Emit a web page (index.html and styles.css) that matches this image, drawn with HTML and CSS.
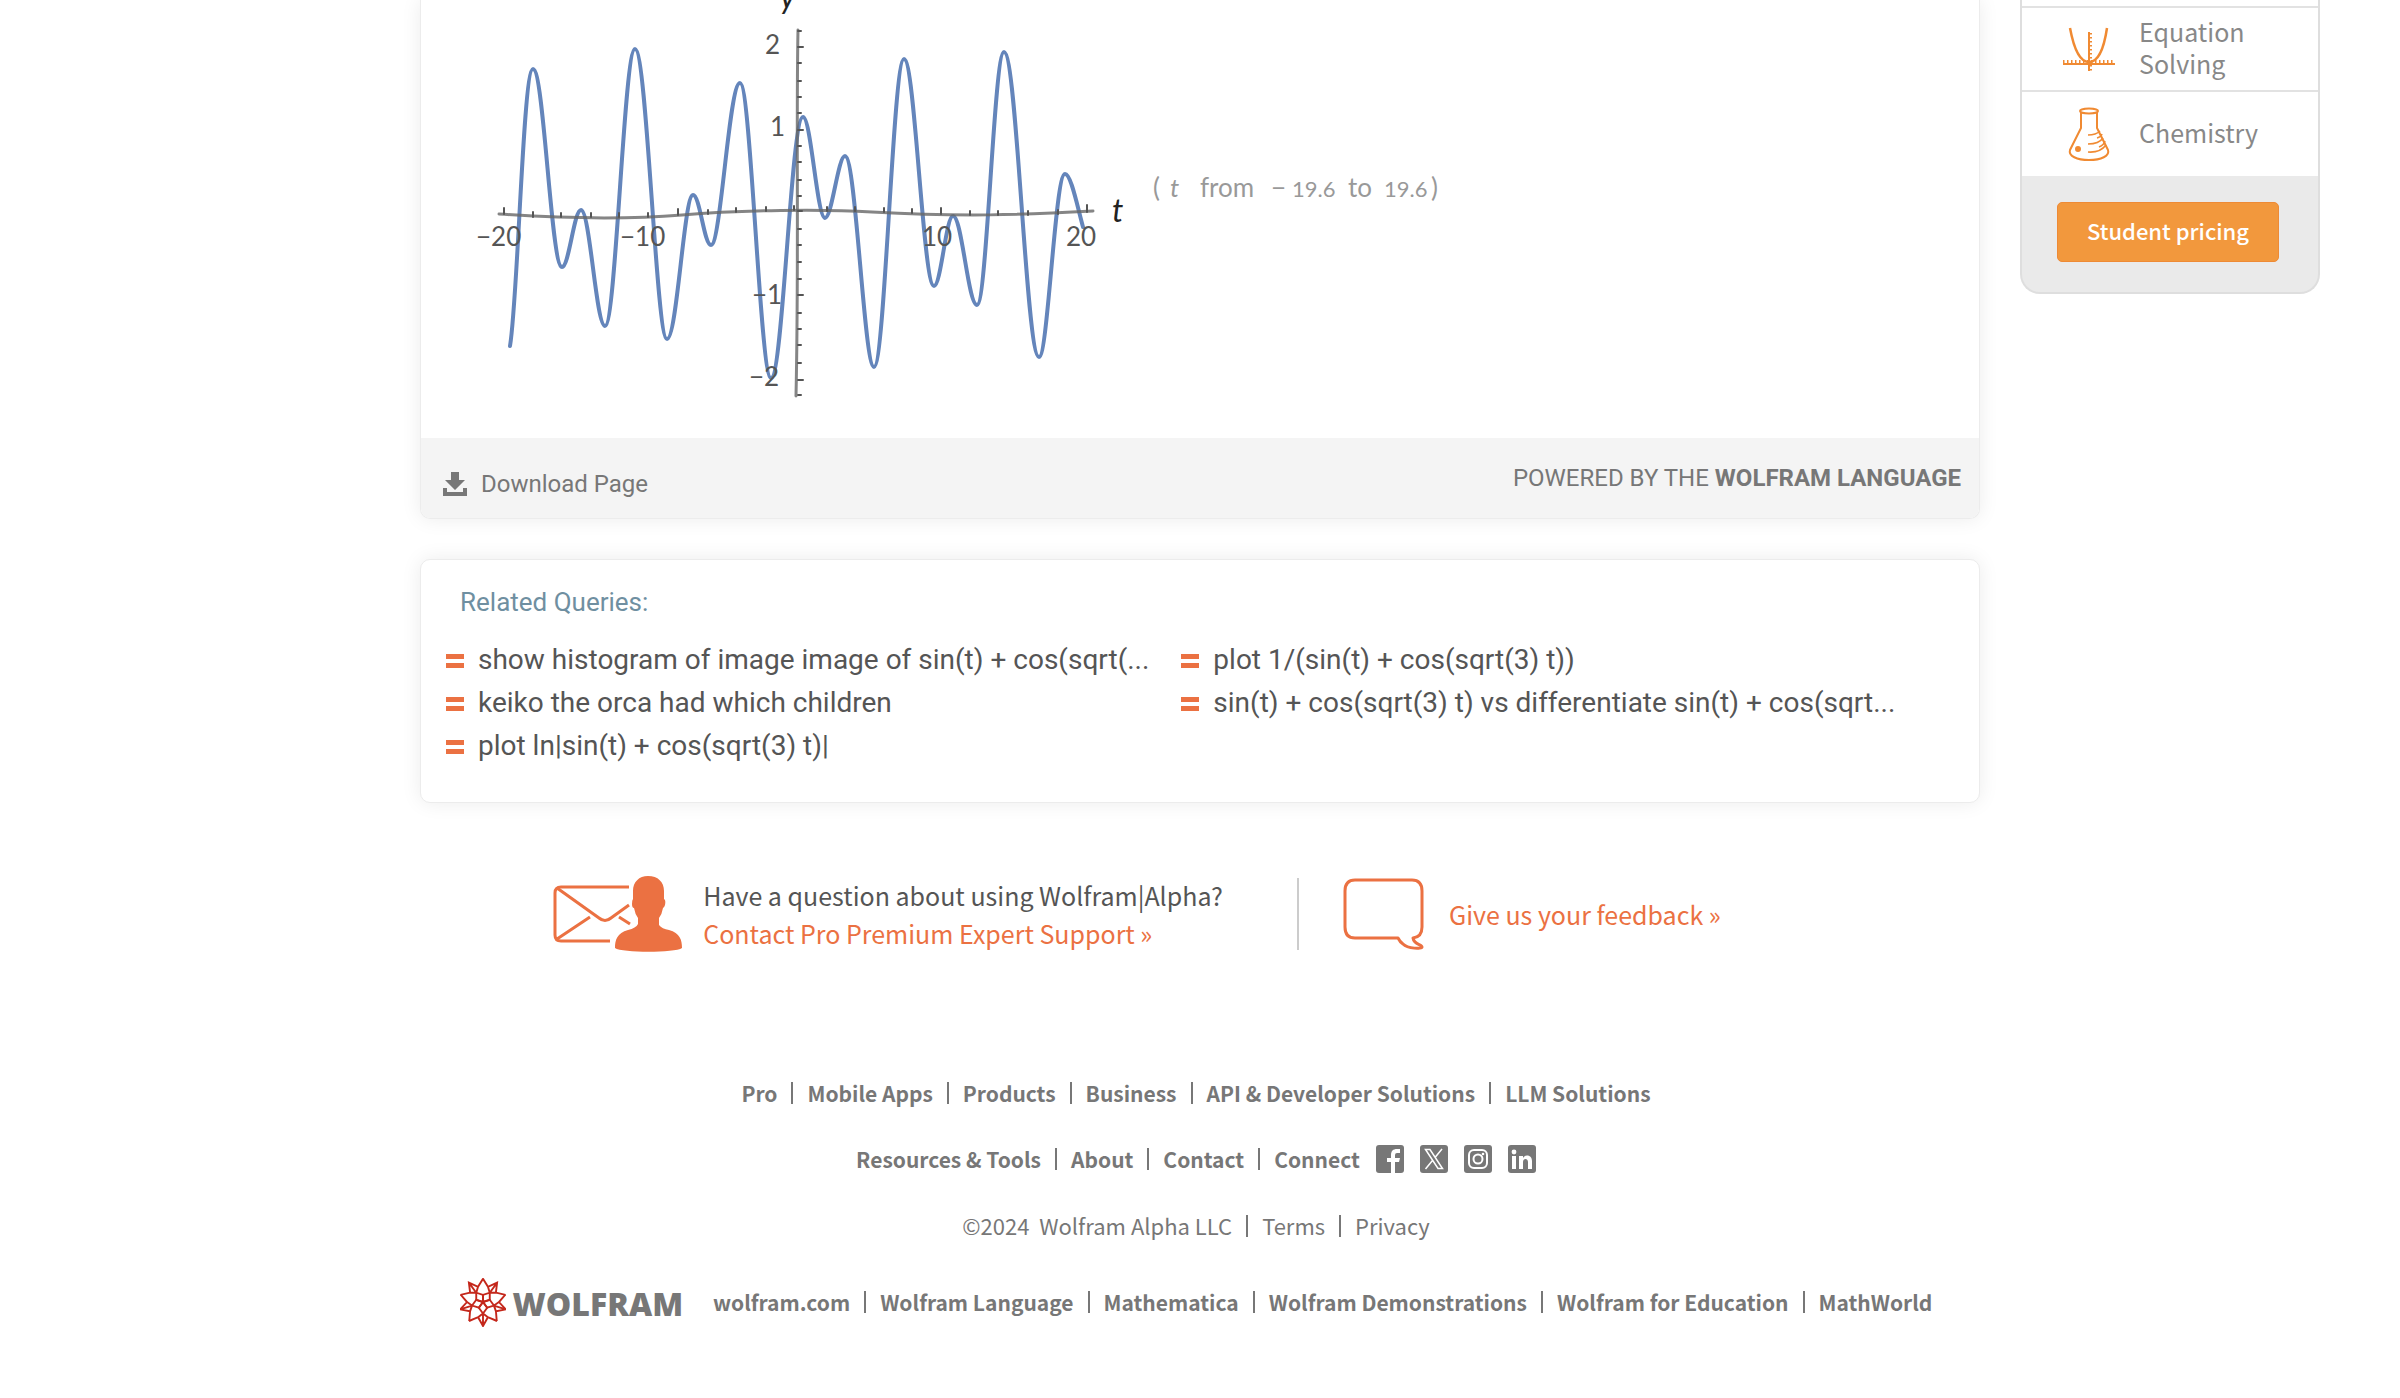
FILE: index.html
```html
<!DOCTYPE html>
<html lang="en">
<head>
<meta charset="utf-8">
<meta name="viewport" content="width=device-width, initial-scale=1">
<title>Wolfram|Alpha</title>
<link rel="stylesheet" href="styles.css">
</head>
<body>
<div class="page">
  <main class="main">
    <section class="card results">
      <svg class="plot" viewBox="-1 0 1120 438" width="1120" height="438" role="img" aria-label="Plot of sin(t) + cos(sqrt(3) t)">
        <g class="curve">
          <path d="M88 346C96 300 101 69 111 69C122 69 129 267 140 267C147 267 152 210 159 210C168 210 174 326 183 326C194 326 202 49 213 49C225 49 234 339 245 339C255 339 262 195 271 195C278 195 282 245 289 245C299 245 307 83 318 83C329 83 338 378 349 378C361 378 369 117 381 117C389 117 395 218 403 218C410 218 416 156 423 156C434 156 442 367 452 367C463 367 471 59 482 59C493 59 501 286 512 286C519 286 524 216 531 216C540 216 546 305 555 305C565 305 572 52 582 52C595 52 604 357 617 357C626 357 633 174 643 174C649 174 655 205 661 227"/>
        </g>
        <g class="axis">
          <path d="M77 214C150 219 210 219 260 215C320 210 400 209 450 212C540 217 600 215 671 211"/>
          <path d="M376 30C374 130 377 260 374 396"/>
        </g>
        <g class="ticks">
          <path d="M82 214v-6M111 217v-5M139 217v-4M169 217v-4M197 217v-4M226 217v-4M256 215v-6M286 214v-4M314 212v-4M344 211v-4M372 210v-4M405 211v-4M433 211v-4M462 212v-4M490 213v-4M519 214v-6M548 215v-4M576 215v-4M606 215v-4M636 214v-4M665 212v-7"/>
          <path d="M376 31h3M376 47h5M376 63h3M376 81h3M376 97h3M376 113h3M376 130h5M376 146h3M376 162h3M376 180h3M376 196h3M376 211h4M376 229h3M376 245h3M376 262h3M376 279h3M376 295h5M376 313h3M376 329h3M376 345h3M376 363h3M376 380h5M376 395h3"/>
        </g>
        <g class="plot-labels">
          <text x="54" y="246">−20</text>
          <text x="198" y="246">−10</text>
          <text x="500" y="246">10</text>
          <text x="644" y="246">20</text>
          <text x="343" y="54">2</text>
          <text x="348" y="136">1</text>
          <text x="330" y="304">−1</text>
          <text x="327" y="386">−2</text>
        </g>
        <text class="variable" x="358" y="8">y</text>
        <text class="variable" x="690" y="222">t</text>
        <g class="range">
          <text x="731" y="197">(</text>
          <text class="slant" x="748" y="197">t</text>
          <text x="778" y="197">from</text>
          <text x="849" y="197">−</text>
          <text class="number" x="870" y="197">19.6</text>
          <text x="926" y="197">to</text>
          <text class="number" x="962" y="197">19.6</text>
          <text x="1009" y="197">)</text>
        </g>
      </svg>
      <footer class="results-bar">
        <a class="download" href="#">
          <svg width="24" height="24" viewBox="0 0 24 24" aria-hidden="true"><path fill="currentColor" d="M8 0h8v8h6L12 18 2 8h6zM0 16h4v4h16v-4h4v8H0z"/></svg>
          Download Page
        </a>
        <a class="powered" href="#">POWERED BY THE <b>WOLFRAM LANGUAGE</b></a>
      </footer>
    </section>

    <section class="card related">
      <h2>Related Queries:</h2>
      <ul>
        <li><a href="#">show histogram of image image of sin(t) + cos(sqrt(...</a></li>
        <li><a href="#">plot 1/(sin(t) + cos(sqrt(3) t))</a></li>
        <li><a href="#">keiko the orca had which children</a></li>
        <li><a href="#">sin(t) + cos(sqrt(3) t) vs differentiate sin(t) + cos(sqrt...</a></li>
        <li><a href="#">plot ln|sin(t) + cos(sqrt(3) t)|</a></li>
      </ul>
    </section>

    <section class="help">
      <div class="help-item contact">
        <svg width="130" height="78" viewBox="0 0 130 78" aria-hidden="true">
          <g fill="none" stroke="#eb7142" stroke-width="3">
            <path d="M76 12H8Q2 12 2 18V60Q2 66 8 66H57"/>
            <path d="M4 13L46 43Q52 48 58 43L76 30M4 64L37 42M66 42L77 49"/>
          </g>
          <path fill="#eb7142" d="M95 1C105 1 111 7 111 16V24Q113 25 112 30Q111 33 110 33Q109 39 106 43V50Q109 54 116 55C127 58 129 65 129 73C122 78 69 78 62 73C62 65 64 58 75 55Q83 53 85 49V43Q82 39 81 33Q79 33 79 29Q79 25 80 24V16C80 7 86 1 95 1Z"/>
        </svg>
        <p>Have a question about using Wolfram|Alpha?<br><a href="#">Contact Pro Premium Expert Support »</a></p>
      </div>
      <div class="help-item feedback">
        <svg width="82" height="72" viewBox="0 0 82 72" aria-hidden="true"><path fill="none" stroke="#eb7142" stroke-width="3" stroke-linejoin="round" d="M12 2H69Q79 2 79 13V49Q79 59 70 60C71 67 79 66 79 69C79 71 65 71 60 66Q57 64 55 60H12Q2 60 2 49V13Q2 2 12 2Z"/></svg>
        <a href="#">Give us your feedback »</a>
      </div>
    </section>

    <footer class="site-footer">
      <nav class="links" aria-label="Products">
        <a href="#">Pro</a><a href="#">Mobile Apps</a><a href="#">Products</a><a href="#">Business</a><a href="#">API &amp; Developer Solutions</a><a href="#">LLM Solutions</a>
      </nav>
      <div class="connect">
        <nav class="links" aria-label="About">
          <a href="#">Resources &amp; Tools</a><a href="#">About</a><a href="#">Contact</a><a href="#">Connect</a>
        </nav>
        <div class="social">
          <a href="#" aria-label="Facebook"><svg width="28" height="28" viewBox="0 0 28 28"><rect width="28" height="28" rx="3" fill="#777"/><path fill="#fff" d="M15 28V17h-4v-4h4v-3c0-4 2-6 6-6h3v4h-3q-2 0-2 2v3h5l-1 4h-4v11z"/></svg></a>
          <a href="#" aria-label="X"><svg width="28" height="28" viewBox="0 0 28 28"><rect width="28" height="28" rx="3" fill="#777"/><path fill="none" stroke="#fff" stroke-width="1.5" d="M5.5 4.500h4.500L22.500 23.500h-4.500zM22 4L15 12.500M12.500 15.500L5.500 24"/></svg></a>
          <a href="#" aria-label="Instagram"><svg width="28" height="28" viewBox="0 0 28 28"><rect width="28" height="28" rx="3" fill="#777"/><g fill="none" stroke="#fff" stroke-width="2"><rect x="5" y="5" width="18" height="18" rx="5"/><circle cx="14" cy="14" r="4.500"/></g><circle cx="19" cy="9" r="1.300" fill="#fff"/></svg></a>
          <a href="#" aria-label="LinkedIn"><svg width="28" height="28" viewBox="0 0 28 28"><rect width="28" height="28" rx="3" fill="#777"/><path fill="#fff" d="M4 11h4v13H4zM11 11h4v2c2-4 9-3 9 3v8h-4v-7c0-4-5-4-5 0v7h-4z"/><circle cx="6" cy="7" r="2.400" fill="#fff"/></svg></a>
        </div>
      </div>
      <nav class="links legal" aria-label="Legal">
        <span>©2024&nbsp; <a href="#">Wolfram Alpha LLC</a></span><a href="#">Terms</a><a href="#">Privacy</a>
      </nav>
      <div class="brand-row">
        <a class="brand" href="#">
          <svg width="46" height="50" viewBox="-23 -25 46 50" aria-hidden="true">
            <defs><path id="petal" d="M0 0L4.200 5.700L0 11.500L-4.200 5.700ZM0 11.500V24M-4.900 15.200L0 11.500L4.900 15.200M-14 19L-4.900 15.200L0 24L4.900 15.200L14 19"/></defs>
            <g fill="none" stroke="#c4271b" stroke-width="1.900">
              <use href="#petal"/><use href="#petal" transform="rotate(72)"/><use href="#petal" transform="rotate(144)"/><use href="#petal" transform="rotate(216)"/><use href="#petal" transform="rotate(288)"/>
            </g>
          </svg>
          <span>WOLFRAM</span>
        </a>
        <nav class="links" aria-label="Wolfram sites">
          <a href="#">wolfram.com</a><a href="#">Wolfram Language</a><a href="#">Mathematica</a><a href="#">Wolfram Demonstrations</a><a href="#">Wolfram for Education</a><a href="#">MathWorld</a>
        </nav>
      </div>
    </footer>
  </main>

  <aside class="sidebar">
    <div class="topics">
      <a class="topic" href="#">
        <svg width="54" height="54" viewBox="0 0 54 54" fill="none" stroke="#f08a32" aria-hidden="true">
          <path stroke-width="2.500" d="M8 6C13 33 20 40 27 40S41 33 45 6"/>
          <path stroke-width="2" d="M27 10V49M1 42H53"/>
          <path stroke-width="4" stroke-dasharray="1.500 2.500" d="M1 40H53M28 11V49"/>
        </svg>
        <span>Equation Solving</span>
      </a>
      <a class="topic" href="#">
        <svg width="54" height="54" viewBox="0 0 54 54" fill="none" stroke="#f08a32" stroke-width="2" aria-hidden="true">
          <ellipse cx="27" cy="4" rx="9" ry="2.500"/>
          <path d="M19 5V21L8 43C6 49 15 53 27 53S48 49 46 43L35 21V5"/>
          <path stroke-width="1.600" d="M26 28Q34 28 38 24M26 37Q37 37 41 31M26 45Q38 46 44 38M35 31Q39 30 40 27M37 40Q42 38 43 34"/>
          <circle cx="16" cy="42" r="2" fill="#f08a32"/>
        </svg>
        <span>Chemistry</span>
      </a>
    </div>
    <button class="pricing" type="button">Student pricing</button>
  </aside>
</div>
</body>
</html>
```
FILE: styles.css
```css
* { box-sizing: border-box; }

body {
  margin: 0;
  background: #fff;
  color: #555;
  font-family: Roboto, sans-serif;
}

a { color: inherit; text-decoration: none; }
svg { display: block; flex: none; }

.page {
  display: grid;
  grid-template-columns: 1fr minmax(0, 1560px) 1fr;
  align-items: start;
  overflow: hidden;
}

.main { grid-column: 2; }

.card {
  border: 1px solid #ececec;
  border-radius: 10px;
  background: #fff;
  box-shadow: 0 0 20px rgba(0, 0, 0, .08);
  overflow: hidden;
}

.results {
  border-top: 0;
  border-radius: 0 0 10px 10px;
}

.plot { max-width: 100%; }
.curve, .axis, .ticks { fill: none; stroke-linecap: round; }
.curve { stroke: #6485bb; stroke-width: 4; }
.axis { stroke: #666; stroke-opacity: .8; stroke-width: 3; }
.ticks { stroke: #555; stroke-width: 2; }
.plot-labels { fill: #555; font: 26px Lato, sans-serif; }
.variable { fill: #222; font: italic 32px Lato, sans-serif; }
.range { fill: #999; font: 26px Lato, sans-serif; }
.number { font-size: 22px; }
.slant { font-style: italic; }

.results-bar {
  display: flex;
  justify-content: space-between;
  align-items: center;
  min-height: 80px;
  padding: 0 18px 0 22px;
  background: #f4f4f4;
  color: #777;
  font-size: 24px;
  line-height: 28px;
}

.download {
  display: flex;
  align-items: center;
  gap: 14px;
  padding-top: 12px;
}

.related {
  margin-top: 40px;
  padding: 26px 24px 36px;
}

.related h2 {
  margin: 0 0 22px;
  padding-left: 15px;
  color: #6f8fa1;
  font-size: 26px;
  font-weight: 400;
  line-height: 32px;
}

.related ul {
  display: grid;
  grid-template-columns: 1fr 1fr;
  gap: 3px 32px;
  margin: 0;
  padding: 0 70px 0 1px;
  list-style: none;
  font-size: 28px;
  line-height: 40px;
}

.related li {
  display: flex;
  align-items: center;
  gap: 14px;
  white-space: nowrap;
}

.related li::before {
  content: "";
  width: 18px;
  height: 4px;
  margin-top: 2px;
  border: solid #eb7142;
  border-width: 5px 0;
}

.help, .site-footer { font-family: "Noto Sans CJK SC", "Source Sans Pro", sans-serif; }

.help {
  display: flex;
  justify-content: center;
  padding: 72px 126px 0 0;
  font-size: 25px;
  line-height: 38px;
}

.help-item {
  display: flex;
  align-items: center;
  gap: 20px;
}

.help p { margin: 0; }
.help a { color: #eb7142; }
.contact { padding-right: 74px; }

.feedback {
  align-self: center;
  gap: 24px;
  height: 72px;
  padding-left: 44px;
  border-left: 2px solid #ccc;
}

.site-footer {
  display: flex;
  flex-direction: column;
  align-items: center;
  gap: 30px;
  padding: 122px 8px 60px 0;
  color: #777;
  font-size: 21px;
  line-height: 36px;
}

.links {
  display: flex;
  align-items: center;
  font-weight: 700;
  white-space: nowrap;
}

.legal {
  font-size: 22px;
  font-weight: 400;
}

.links > * + *::before {
  content: "";
  display: inline-block;
  width: 2px;
  height: 22px;
  margin: 0 14px;
  background: #777;
  vertical-align: -2px;
}

.connect { display: flex; align-items: center; }

.social {
  display: flex;
  gap: 16px;
  padding-left: 16px;
}

.brand-row {
  display: flex;
  align-items: center;
  gap: 30px;
  padding-top: 2px;
}

.brand {
  display: flex;
  align-items: center;
  gap: 7px;
  font: 800 32px/50px "Open Sans", sans-serif;
}

.brand span { padding-top: 4px; }

.sidebar {
  grid-column: 3;
  width: 300px;
  margin-left: 40px;
  padding-bottom: 30px;
  border: 2px solid #dedede;
  border-top: 0;
  border-radius: 0 0 20px 20px;
  background: #eaeaea;
  font-family: "Noto Sans CJK SC", "Source Sans Pro", sans-serif;
  font-size: 25px;
  text-align: center;
}

.topics {
  padding-top: 6px;
  background: #fff;
  text-align: left;
}

.topic {
  display: flex;
  align-items: center;
  gap: 23px;
  height: 84px;
  padding: 0 60px 0 40px;
  border-top: 2px solid #e2e2e2;
  color: #888;
  line-height: 32px;
}

.topic:last-child { height: 86px; }
.topic span { padding-bottom: 4px; }

.pricing {
  width: 222px;
  height: 60px;
  margin: 26px 4px 0 0;
  padding: 0 0 4px;
  border: 1px solid #ee8a35;
  border-radius: 5px;
  background: #f2983d;
  color: #fff;
  font: 500 22px "Noto Sans CJK SC", "Source Sans Pro", sans-serif;
}
```
